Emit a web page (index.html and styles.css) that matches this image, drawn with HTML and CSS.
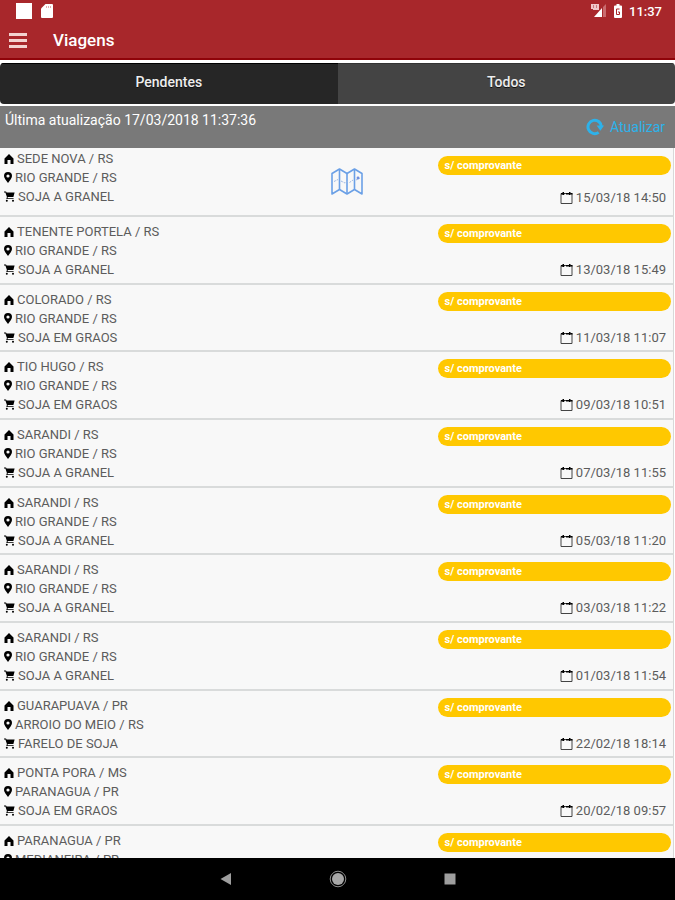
FILE: index.html
```html
<!DOCTYPE html>
<html lang="pt-BR">
<head>
    <meta charset="UTF-8">
    <meta name="viewport" content="width=device-width, initial-scale=1.0">
    <title>Viagens</title>
    <link rel="stylesheet" href="styles.css">
</head>
<body>

    <!-- Icones -->
    <svg class="sprite" aria-hidden="true">
        <symbol id="i-home" viewBox="0 0 10 10"><path d="M5 0 9.500 4.500V10H6.500V6H3.500V10H.5V4.500Z"/></symbol>
        <symbol id="i-pin" viewBox="0 0 8 11"><path fill-rule="evenodd" d="M4 0a4 4 0 0 1 4 4C8 6.3 6 7.8 4 11 2 7.8 0 6.3 0 4a4 4 0 0 1 4-4ZM4 2.4a1.6 1.6 0 1 0 0 3.2 1.6 1.6 0 0 0 0-3.2Z"/></symbol>
        <symbol id="i-cart" viewBox="0 0 11 11"><path d="M0 .6H2L2.600 1.600H10.600L9.400 6H3.800L3.500 7.200H9.600V8H2.300L2.900 6 1.400 1.400H0Z"/><circle cx="2.800" cy="9.700" r="1"/><circle cx="9" cy="9.700" r="1"/></symbol>
        <symbol id="i-cal" viewBox="0 0 13 12"><path fill="none" stroke="#444" d="M1 1.500H12V11.500H1Z"/><path d="M1 1H4.500V2.500H1ZM6 1H9V2.500H6ZM10.500 1H12.500V2.500H10.500Z"/><path d="M2.500 0H4V3H2.500ZM9 0H10.500V3H9Z"/></symbol>
    </svg>

    <header class="header">
        <div class="status">
            <div class="status-group">
                <svg width="16" height="16" viewBox="0 0 16 16"><path fill="#fff" d="M0 0H16V16H0Z"/></svg>
                <svg width="12" height="14" viewBox="0 0 12 14"><path fill="#fff" d="M4.5 0H11Q12 0 12 1V13Q12 14 11 14H1Q0 14 0 13V4.5Z"/><path stroke="#e3adaf" d="M5.5 2V4M7.5 2V4M9.5 2V4"/></svg>
            </div>
            <div class="status-group right">
                <svg width="16" height="14" viewBox="0 0 16 14"><path fill="#f0c8ca" d="M0 0H8V6H2V5H0Z"/><path stroke="#c9787b" fill="none" d="M2.5 1V4M5.500 1V4"/><path fill="#fff" d="M11 4V13H3Z"/><path fill="#c96b6e" d="M12 3 15 0V13H12Z"/></svg>
                <svg width="8" height="14" viewBox="0 0 8 14"><path fill="#fff" d="M2.5 0H5.5V1.5H7Q8 1.5 8 2.5V13Q8 14 7 14H1Q0 14 0 13V2.5Q0 1.5 1 1.5H2.5Z"/><path fill="none" stroke="#a8272b" d="M5.5 5H2.5V10.5H5.5V8H4"/></svg>
                <span class="clock">11:37</span>
            </div>
        </div>
        <div class="bar">
            <button class="menu" type="button" aria-label="Menu"><span></span><span></span><span></span></button>
            <h1>Viagens</h1>
        </div>
    </header>

    <nav class="tabs">
        <button class="tab active" type="button">Pendentes</button>
        <button class="tab" type="button">Todos</button>
    </nav>

    <div class="update">
        <p>Última atualização 17/03/2018 11:37:36</p>
        <button class="refresh" type="button">
            <svg width="18" height="18" viewBox="0 0 18 18"><path fill="none" stroke="currentColor" stroke-width="3" d="M12.6 14.4A6.7 6.7 0 1 1 15.4 9"/><path fill="currentColor" d="M10.6 7.5H18L14.4 12.8Z"/></svg>
            Atualizar
        </button>
    </div>

    <ul class="trips">
        <li class="trip first">
            <div class="route">
                <p><svg class="home"><use href="#i-home"/></svg>SEDE NOVA / RS</p>
                <p><svg class="pin"><use href="#i-pin"/></svg>RIO GRANDE / RS</p>
                <p><svg class="cart"><use href="#i-cart"/></svg>SOJA A GRANEL</p>
            </div>
            <button class="map" type="button" aria-label="Mapa">
                <svg width="32" height="28" viewBox="0 0 32 28"><g fill="none" stroke="#6ba0e6" stroke-width="1.6" stroke-linejoin="round"><path d="M1 5.5 8.5 1 16 5.5 23.5 1 31 5.5V26L23.5 21.5 16 26 8.5 21.5 1 26Z"/><path d="M8.5 1V21.5M16 5.5V26M23.5 1V21.5"/></g><path fill="none" stroke="#9cb8e4" stroke-dasharray="2 1" d="M3 13.5 7 11.5M10 13 14 15 17 13M18.5 14.5 22 12M25 12 29 10"/><circle cx="27" cy="10" r="1.4" fill="#6f8fe0"/></svg>
            </button>
            <div class="info">
                <span class="badge">s/ comprovante</span>
                <p class="date"><svg class="cal"><use href="#i-cal"/></svg>15/03/18 14:50</p>
            </div>
        </li>
        <li class="trip">
            <div class="route">
                <p><svg class="home"><use href="#i-home"/></svg>TENENTE PORTELA / RS</p>
                <p><svg class="pin"><use href="#i-pin"/></svg>RIO GRANDE / RS</p>
                <p><svg class="cart"><use href="#i-cart"/></svg>SOJA A GRANEL</p>
            </div>
            <div class="info">
                <span class="badge">s/ comprovante</span>
                <p class="date"><svg class="cal"><use href="#i-cal"/></svg>13/03/18 15:49</p>
            </div>
        </li>
        <li class="trip">
            <div class="route">
                <p><svg class="home"><use href="#i-home"/></svg>COLORADO / RS</p>
                <p><svg class="pin"><use href="#i-pin"/></svg>RIO GRANDE / RS</p>
                <p><svg class="cart"><use href="#i-cart"/></svg>SOJA EM GRAOS</p>
            </div>
            <div class="info">
                <span class="badge">s/ comprovante</span>
                <p class="date"><svg class="cal"><use href="#i-cal"/></svg>11/03/18 11:07</p>
            </div>
        </li>
        <li class="trip">
            <div class="route">
                <p><svg class="home"><use href="#i-home"/></svg>TIO HUGO / RS</p>
                <p><svg class="pin"><use href="#i-pin"/></svg>RIO GRANDE / RS</p>
                <p><svg class="cart"><use href="#i-cart"/></svg>SOJA EM GRAOS</p>
            </div>
            <div class="info">
                <span class="badge">s/ comprovante</span>
                <p class="date"><svg class="cal"><use href="#i-cal"/></svg>09/03/18 10:51</p>
            </div>
        </li>
        <li class="trip">
            <div class="route">
                <p><svg class="home"><use href="#i-home"/></svg>SARANDI / RS</p>
                <p><svg class="pin"><use href="#i-pin"/></svg>RIO GRANDE / RS</p>
                <p><svg class="cart"><use href="#i-cart"/></svg>SOJA A GRANEL</p>
            </div>
            <div class="info">
                <span class="badge">s/ comprovante</span>
                <p class="date"><svg class="cal"><use href="#i-cal"/></svg>07/03/18 11:55</p>
            </div>
        </li>
        <li class="trip">
            <div class="route">
                <p><svg class="home"><use href="#i-home"/></svg>SARANDI / RS</p>
                <p><svg class="pin"><use href="#i-pin"/></svg>RIO GRANDE / RS</p>
                <p><svg class="cart"><use href="#i-cart"/></svg>SOJA A GRANEL</p>
            </div>
            <div class="info">
                <span class="badge">s/ comprovante</span>
                <p class="date"><svg class="cal"><use href="#i-cal"/></svg>05/03/18 11:20</p>
            </div>
        </li>
        <li class="trip">
            <div class="route">
                <p><svg class="home"><use href="#i-home"/></svg>SARANDI / RS</p>
                <p><svg class="pin"><use href="#i-pin"/></svg>RIO GRANDE / RS</p>
                <p><svg class="cart"><use href="#i-cart"/></svg>SOJA A GRANEL</p>
            </div>
            <div class="info">
                <span class="badge">s/ comprovante</span>
                <p class="date"><svg class="cal"><use href="#i-cal"/></svg>03/03/18 11:22</p>
            </div>
        </li>
        <li class="trip">
            <div class="route">
                <p><svg class="home"><use href="#i-home"/></svg>SARANDI / RS</p>
                <p><svg class="pin"><use href="#i-pin"/></svg>RIO GRANDE / RS</p>
                <p><svg class="cart"><use href="#i-cart"/></svg>SOJA A GRANEL</p>
            </div>
            <div class="info">
                <span class="badge">s/ comprovante</span>
                <p class="date"><svg class="cal"><use href="#i-cal"/></svg>01/03/18 11:54</p>
            </div>
        </li>
        <li class="trip">
            <div class="route">
                <p><svg class="home"><use href="#i-home"/></svg>GUARAPUAVA / PR</p>
                <p><svg class="pin"><use href="#i-pin"/></svg>ARROIO DO MEIO / RS</p>
                <p><svg class="cart"><use href="#i-cart"/></svg>FARELO DE SOJA</p>
            </div>
            <div class="info">
                <span class="badge">s/ comprovante</span>
                <p class="date"><svg class="cal"><use href="#i-cal"/></svg>22/02/18 18:14</p>
            </div>
        </li>
        <li class="trip">
            <div class="route">
                <p><svg class="home"><use href="#i-home"/></svg>PONTA PORA / MS</p>
                <p><svg class="pin"><use href="#i-pin"/></svg>PARANAGUA / PR</p>
                <p><svg class="cart"><use href="#i-cart"/></svg>SOJA EM GRAOS</p>
            </div>
            <div class="info">
                <span class="badge">s/ comprovante</span>
                <p class="date"><svg class="cal"><use href="#i-cal"/></svg>20/02/18 09:57</p>
            </div>
        </li>
        <li class="trip">
            <div class="route">
                <p><svg class="home"><use href="#i-home"/></svg>PARANAGUA / PR</p>
                <p><svg class="pin"><use href="#i-pin"/></svg>MEDIANEIRA / PR</p>
            </div>
            <div class="info">
                <span class="badge">s/ comprovante</span>
            </div>
        </li>
    </ul>

    <footer class="android">
        <button type="button" aria-label="Voltar"><svg width="18" height="18" viewBox="0 0 18 18"><path fill="#9e9e9e" d="M14 3V15L3.5 9Z"/></svg></button>
        <button type="button" aria-label="Início"><svg width="18" height="18" viewBox="0 0 18 18"><circle cx="9" cy="9" r="6" fill="#a8a8a8"/><circle cx="9" cy="9" r="7.8" fill="none" stroke="#8c8c8c"/></svg></button>
        <button type="button" aria-label="Recentes"><svg width="18" height="18" viewBox="0 0 18 18"><path fill="#9e9e9e" d="M3.5 3.5H14.5V14.5H3.5Z"/></svg></button>
    </footer>

</body>
</html>
```
FILE: styles.css
```css
* {
    box-sizing: border-box;
}
body {
    margin: 0;
    height: 100vh;
    display: flex;
    flex-direction: column;
    font-family: Roboto, sans-serif;
    background: #fff;
}
h1, p, ul {
    margin: 0;
    padding: 0;
}
button {
    font-family: inherit;
    border: 0;
    padding: 0;
    background: none;
}
svg {
    flex: none;
}
.sprite {
    position: absolute;
    width: 0;
    height: 0;
}

/* Cabeçalho */
.header {
    flex: none;
    color: #fff;
    background: #a8272b;
    border-bottom: 2px solid #8f0309;
}
.status {
    display: flex;
    justify-content: space-between;
    height: 22px;
    padding: 0 13px 0 16px;
}
.status-group {
    display: flex;
    align-items: center;
    gap: 9px;
}
.status-group.right {
    gap: 7px;
}
.clock {
    font-size: 13px;
    font-weight: 500;
}
.bar {
    display: flex;
    align-items: center;
    gap: 26px;
    height: 36px;
    padding-left: 9px;
}
.menu {
    display: flex;
    flex-direction: column;
    gap: 3px;
    width: 18px;
}
.menu span {
    height: 3px;
    background: #f3d3d0;
}
h1 {
    font-size: 17px;
    font-weight: 500;
}

/* Abas */
.tabs {
    flex: none;
    display: flex;
    margin: 3px 0 2px;
    border-radius: 4px;
    overflow: hidden;
}
.tab {
    flex: 1;
    height: 41px;
    padding-bottom: 5px;
    font-size: 14px;
    font-weight: 500;
    color: #eee;
    background: #444;
    border-top: 1px solid #333;
    text-shadow: 0 1px 0 #111;
}
.tab.active {
    background: #262626;
    border-top-color: #000;
}

.update {
    flex: none;
    display: flex;
    justify-content: space-between;
    height: 42px;
    padding: 0 10px 0 5px;
    font-size: 14px;
    line-height: 28px;
    color: #fff;
    background: #797979;
}
.refresh {
    display: flex;
    align-items: center;
    gap: 6px;
    font-size: 14px;
    color: #2db2ea;
}

/* Lista de viagens */
.trips {
    flex: 1;
    min-height: 0;
    overflow: hidden;
    list-style: none;
}
.trip {
    display: grid;
    grid-template-columns: 1fr 16% 35%;
    height: 68px;
    margin-right: 1px;
    padding: 5px 2px 0 4px;
    font-size: 13px;
    line-height: 19px;
    color: #5c5c5c;
    background: #f8f8f8;
    border-right: 1px solid #d8d8d8;
    border-bottom: 2px solid #d9dbdb;
}
.trip:nth-child(3n) {
    height: 67px;
}
.trip.first {
    height: 69px;
    padding-top: 1px;
}
.route p,
.date {
    display: flex;
    align-items: center;
    gap: 3px;
}
.route svg,
.date svg {
    color: #000;
    fill: #000;
}
.info {
    grid-column: 3;
    display: flex;
    flex-direction: column;
    gap: 17px;
}
.badge {
    height: 19px;
    margin-top: 2px;
    padding-left: 7px;
    font-size: 11px;
    font-weight: 700;
    color: #fff;
    background: #ffc800;
    border-radius: 10px;
}
.first .badge {
    margin-top: 7px;
}
.first .info {
    gap: 13px;
}
.date {
    justify-content: flex-end;
    padding-right: 5px;
}
.map {
    justify-self: start;
    align-self: center;
}
.map svg {
    display: block;
}
.home {
    width: 10px;
    height: 10px;
}
.pin {
    width: 8px;
    height: 11px;
}
.cart {
    width: 11px;
    height: 11px;
}
.cal {
    width: 13px;
    height: 12px;
}

/* Barra do Android */
.android {
    flex: none;
    display: flex;
    justify-content: center;
    align-items: center;
    gap: 94px;
    height: 42px;
    background: #000;
}
.android svg {
    display: block;
}
```
